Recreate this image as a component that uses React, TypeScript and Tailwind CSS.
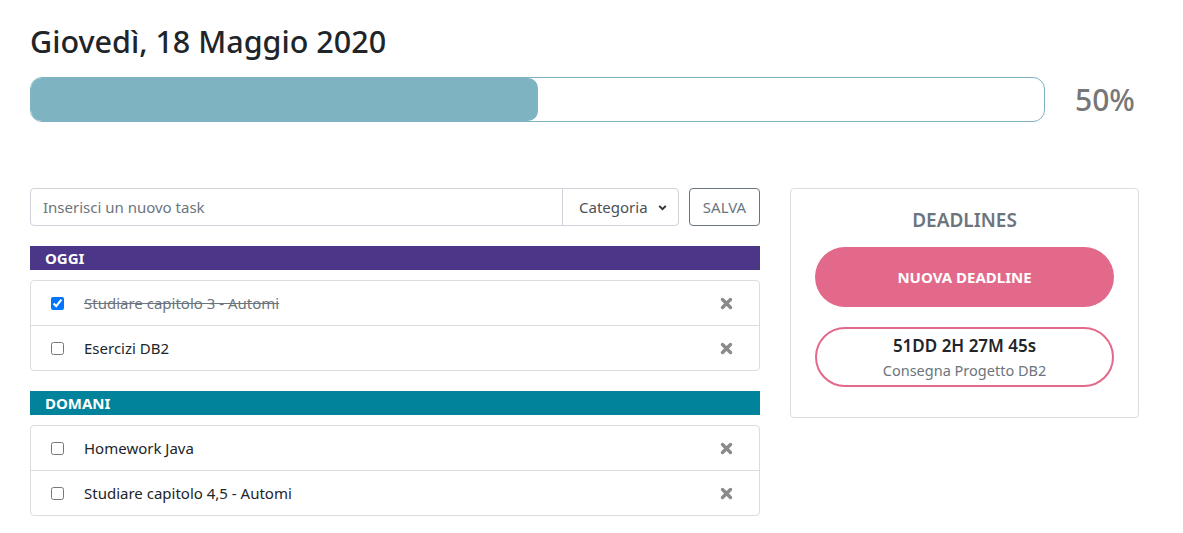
import React from "react";

const XIcon = () => (
  <svg width="13" height="13" viewBox="0 0 13 13" aria-hidden="true">
    <path d="M2.5 2.5 L10.5 10.5 M10.5 2.5 L2.5 10.5" stroke="#8a8a8a" strokeWidth="3.4" strokeLinecap="round" />
  </svg>
);

type Task = { text: string; done?: boolean };

const TaskList = ({ tasks }: { tasks: Task[] }) => (
  <div className="mt-[10px] rounded-[4px] border border-[#dcdcdc] bg-white">
    {tasks.map((t, i) => (
      <div
        key={i}
        className={`flex h-[44px] items-center pl-[20px] pr-[26px] ${i > 0 ? "box-content border-t border-[#dcdcdc]" : ""}`}
      >
        <input
          type="checkbox"
          defaultChecked={t.done}
          className="m-0 h-[13px] w-[13px] accent-[#0075ff]"
        />
        <span
          className={`ml-[20px] flex-1 text-[15px] ${t.done ? "text-[#6c757d] line-through" : "text-[#212529]"}`}
        >
          {t.text}
        </span>
        <XIcon />
      </div>
    ))}
  </div>
);

export default function App() {
  return (
    <div
      className="min-h-[533px] bg-white px-[30px] pt-[21px]"
      style={{ fontFamily: '"Noto Sans", "Open Sans", sans-serif' }}
    >
      <h1 className="text-[30.5px] font-medium leading-[40px] text-[#212529]">Giovedì, 18 Maggio 2020</h1>
      <div className="mt-[16px] flex items-center">
        <div className="h-[45px] w-[1015px] overflow-hidden rounded-[12px] border border-[#7fb3c2] bg-white">
          <div className="h-full w-[507px] rounded-[10px] bg-[#7eb3c2]" />
        </div>
        <div className="ml-[30px] text-[30px] font-medium text-[#777777]">50%</div>
      </div>

      <div className="mt-[66px] flex gap-[30px]">
        <div className="w-[730px]">
          <div className="flex h-[38px]">
            <div className="flex flex-1">
              <input
                placeholder="Inserisci un nuovo task"
                className="h-[38px] flex-1 rounded-l-[4px] border border-[#ced4da] px-[12px] text-[15px] text-[#495057] outline-none placeholder:text-[#6c757d]"
              />
              <div className="-ml-px flex h-[38px] w-[117px] items-center justify-between rounded-r-[4px] border border-[#ced4da] pl-[16px] pr-[10px] text-[15px] text-[#495057]">
                <span>Categoria</span>
                <svg width="11" height="11" viewBox="0 0 10 10">
                  <path d="M2 3.5 L5 6.5 L8 3.5" stroke="#333" strokeWidth="1.8" fill="none" />
                </svg>
              </div>
            </div>
            <button className="ml-[10px] h-[38px] w-[71px] rounded-[4px] border border-[#6c757d] text-[15px] text-[#6c757d]">
              SALVA
            </button>
          </div>

          <div className="mt-[20px] flex h-[24px] items-center bg-[#4b3687] pl-[15px] text-[15px] font-bold text-white">
            OGGI
          </div>
          <TaskList tasks={[{ text: "Studiare capitolo 3 - Automi", done: true }, { text: "Esercizi DB2" }]} />

          <div className="mt-[20px] flex h-[24px] items-center bg-[#01839b] pl-[15px] text-[15px] font-bold text-white">
            DOMANI
          </div>
          <TaskList tasks={[{ text: "Homework Java" }, { text: "Studiare capitolo 4,5 - Automi" }]} />
        </div>

        <div className="h-[230px] w-[349px] rounded-[4px] border border-[#dcdcdc] px-[24px] pt-[17px]">
          <div className="text-center text-[19px] font-semibold leading-[28px] text-[#6c757d]">DEADLINES</div>
          <button className="mt-[13px] flex h-[60px] w-full items-center justify-center rounded-full bg-[#e3698a] text-[15px] font-bold text-white">
            NUOVA DEADLINE
          </button>
          <div className="mt-[20px] flex h-[60px] w-full flex-col items-center justify-center rounded-full border-2 border-[#e3698a]">
            <div className="text-[17px] font-semibold leading-[22px] text-[#212529]">51DD 2H 27M 45s</div>
            <div className="mt-[4px] text-[14.5px] leading-[18px] text-[#6c757d]">Consegna Progetto DB2</div>
          </div>
        </div>
      </div>
    </div>
  );
}
